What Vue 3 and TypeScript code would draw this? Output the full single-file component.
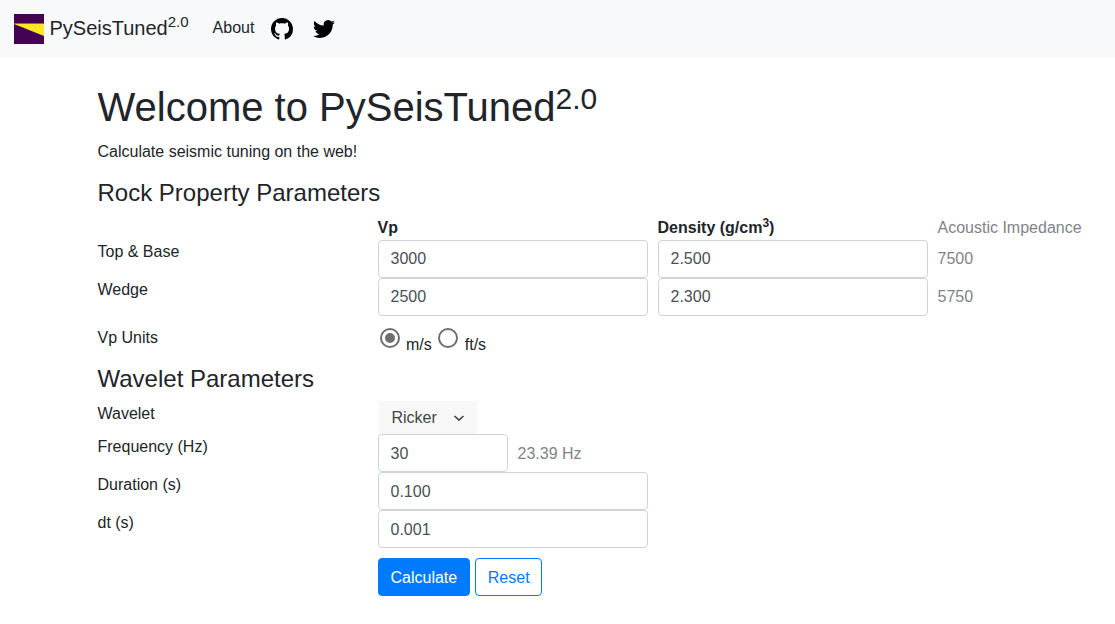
<script setup lang="ts">
interface Row { label: string; vp: string; density: string; ai: string }
const rows: Row[] = [
  { label: 'Top & Base', vp: '3000', density: '2.500', ai: '7500' },
  { label: 'Wedge', vp: '2500', density: '2.300', ai: '5750' },
]
</script>

<template>
  <nav class="navbar">
    <a class="brand">
      <svg class="logo" viewBox="0 0 30 30" width="30" height="30">
        <rect width="30" height="30" fill="#440154" />
        <polygon points="0,10 30,10 30,22" fill="#fde725" />
        <rect x="0" y="9" width="30" height="1" fill="#8a6a50" />
      </svg>
      <span class="brand-text">PySeisTuned<sup>2.0</sup></span>
    </a>
    <a class="nav-link">About</a>
    <svg class="gh" viewBox="0 0 16 16" width="22" height="22">
      <path fill="#000" d="M8 0C3.58 0 0 3.58 0 8c0 3.54 2.29 6.53 5.47 7.59.4.07.55-.17.55-.38 0-.19-.01-.82-.01-1.49-2.01.37-2.53-.49-2.69-.94-.09-.23-.48-.94-.82-1.13-.28-.15-.68-.52-.01-.53.63-.01 1.08.58 1.23.82.72 1.21 1.87.87 2.33.66.07-.52.28-.87.51-1.07-1.78-.2-3.64-.89-3.64-3.95 0-.87.31-1.59.82-2.15-.08-.2-.36-1.02.08-2.12 0 0 .67-.21 2.2.82.64-.18 1.32-.27 2-.27.68 0 1.36.09 2 .27 1.53-1.04 2.2-.82 2.2-.82.44 1.1.16 1.92.08 2.12.51.56.82 1.27.82 2.15 0 3.07-1.87 3.75-3.65 3.95.29.25.54.73.54 1.48 0 1.07-.01 1.93-.01 2.2 0 .21.15.46.55.38A8.013 8.013 0 0016 8c0-4.42-3.58-8-8-8z" />
    </svg>
    <svg class="tw" viewBox="0 0 24 24" width="22" height="22">
      <path fill="#000" d="M23.953 4.57a10 10 0 01-2.825.775 4.958 4.958 0 002.163-2.723c-.951.555-2.005.959-3.127 1.184a4.92 4.92 0 00-8.384 4.482C7.69 8.095 4.067 6.13 1.64 3.162a4.822 4.822 0 00-.666 2.475c0 1.71.87 3.213 2.188 4.096a4.904 4.904 0 01-2.228-.616v.06a4.923 4.923 0 003.946 4.827 4.996 4.996 0 01-2.212.085 4.936 4.936 0 004.604 3.417 9.867 9.867 0 01-6.102 2.105c-.39 0-.779-.023-1.17-.067a13.995 13.995 0 007.557 2.209c9.053 0 13.998-7.496 13.998-13.985 0-.21 0-.42-.015-.63A9.935 9.935 0 0024 4.59z" />
    </svg>
  </nav>

  <main class="main">
    <h1>Welcome to PySeisTuned<sup>2.0</sup></h1>
    <p class="lead">Calculate seismic tuning on the web!</p>

    <h4>Rock Property Parameters</h4>
    <div class="grid head">
      <span></span>
      <strong>Vp</strong>
      <strong>Density (g/cm<sup>3</sup>)</strong>
      <span class="muted">Acoustic Impedance</span>
    </div>
    <div v-for="r in rows" :key="r.label" class="grid">
      <label class="row-label">{{ r.label }}</label>
      <input class="field" :value="r.vp" />
      <input class="field" :value="r.density" />
      <span class="muted value">{{ r.ai }}</span>
    </div>
    <div class="grid units">
      <label class="row-label">Vp Units</label>
      <div class="radios">
        <input class="radio" type="radio" name="u" checked />
        <span class="radio-text">m/s</span>
        <input class="radio" type="radio" name="u" />
        <span class="radio-text ft">ft/s</span>
      </div>
    </div>

    <h4 class="wavelet-title">Wavelet Parameters</h4>
    <div class="grid select-row wave">
      <label class="row-label">Wavelet</label>
      <div class="select">
        <span>Ricker</span>
        <svg viewBox="0 0 12 12" width="12" height="12">
          <path d="M1.5 4 L6 8.2 L10.5 4" fill="none" stroke="#444" stroke-width="1.6" />
        </svg>
      </div>
    </div>
    <div class="grid wave">
      <label class="row-label">Frequency (Hz)</label>
      <div class="freq">
        <input class="field short" value="30" />
        <span class="muted hz">23.39 Hz</span>
      </div>
    </div>
    <div class="grid wave">
      <label class="row-label">Duration (s)</label>
      <input class="field" value="0.100" />
    </div>
    <div class="grid wave">
      <label class="row-label">dt (s)</label>
      <input class="field" value="0.001" />
    </div>
    <div class="grid actions">
      <span></span>
      <div class="buttons">
        <button class="btn primary">Calculate</button>
        <button class="btn outline">Reset</button>
      </div>
    </div>
  </main>
</template>

<style>
html, body { margin: 0; background: #fff; overflow-x: hidden; }
</style>

<style scoped>
.navbar {
  height: 57px;
  box-sizing: border-box;
  background: #f8f9fa;
  display: flex;
  align-items: center;
  padding-left: 14px;
  font-family: "Liberation Sans", sans-serif;
  color: #212529;
}
.brand { display: flex; align-items: center; }
.logo { display: block; }
.brand-text { font-size: 20px; margin-left: 5.5px; line-height: 30px; position: relative; top: -1px; }
.brand-text sup { font-size: 15px; line-height: 0; vertical-align: baseline; position: relative; top: -8px; }
.nav-link { font-size: 16px; margin-left: 24px; position: relative; top: -1px; }
.gh { margin-left: 17px; }
.tw { margin-left: 19.5px; }
.main {
  padding: 0 0 0 97.5px;
  font-family: "Liberation Sans", sans-serif;
  font-size: 16px;
  line-height: 24px;
  color: #212529;
}
h1 { font-size: 40px; line-height: 48px; margin: 0; padding-top: 26px; font-weight: 400; }
h1 sup { font-size: 30px; line-height: 0; vertical-align: baseline; position: relative; top: -12px; }
.lead { margin: 9px 0 0; }
h4 { font-size: 24px; font-weight: 400; line-height: 29px; margin: 14px 0 0; }
.grid {
  display: grid;
  grid-template-columns: 280px 280px 280px auto;
  align-items: start;
}
.head { height: 24px; margin-top: 9px; line-height: 24px; }
.head sup { font-size: 12px; line-height: 0; vertical-align: baseline; position: relative; top: -6px; }
.head strong { font-weight: 700; }
.row-label { line-height: 24px; }
.wave .row-label { margin-top: 1px; }
.field {
  box-sizing: border-box;
  width: 270px;
  height: 38px;
  padding: 6px 12px;
  border: 1px solid #ced4da;
  border-radius: 4px;
  font: 16px/24px "Liberation Sans", sans-serif;
  color: #495057;
  background: #fff;
  display: block;
}
.wave .field { padding: 7px 12px 5px; }
.short { width: 130px; }
.muted { color: #808488; }
.value { line-height: 38px; }
.hz { padding-top: 2px; }
.units { margin-top: 10px; height: 31px; }
.radios { display: flex; align-items: flex-start; padding-left: 2.5px; }
.radio {
  appearance: none;
  -webkit-appearance: none;
  width: 20px;
  height: 20px;
  margin: 2px 0 0 0;
  border: 2px solid #6f6f6f;
  border-radius: 50%;
  background: #fff;
  box-sizing: border-box;
  position: relative;
}
.radio:checked::after {
  content: "";
  position: absolute;
  inset: 3px;
  border-radius: 50%;
  background: #6f6f6f;
}
.radio-text { margin: 7px 6px 0 6px; line-height: 24px; }
.ft { margin-left: 7px; }
.wavelet-title { margin-top: 7px; }
.select-row { margin-top: 8px; height: 33px; }
.select {
  box-sizing: border-box;
  width: 100px;
  height: 33px;
  background: #f8f8f8;
  display: flex;
  align-items: center;
  justify-content: space-between;
  padding: 0 13px 0 14px;
  color: #444;
}
.freq { display: flex; align-items: center; gap: 10px; grid-column: 2 / 4; }
.actions { margin-top: 10px; }
.buttons { display: flex; gap: 5px; }
.btn {
  box-sizing: border-box;
  height: 38px;
  padding: 2px 12px 0;
  border-radius: 4px;
  font: 16px/24px "Liberation Sans", sans-serif;
  border: 1px solid #007bff;
}
.primary { background: #007bff; color: #fff; }
.outline { background: #fff; color: #007bff; padding: 2px 11.6px 0; }
</style>
